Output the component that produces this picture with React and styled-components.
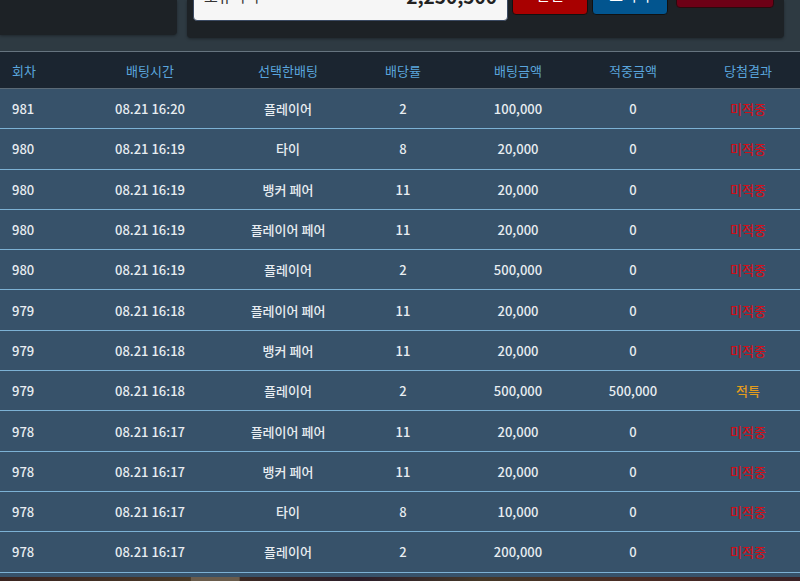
import styled, { createGlobalStyle } from "styled-components";

const GlobalStyle = createGlobalStyle`
  html, body {
    margin: 0;
    padding: 0;
    background: #2e3a42;
    font-family: "Noto Sans CJK KR", "Noto Sans", sans-serif;
  }
  * { box-sizing: border-box; }
`;

const rows = [
  ["981", "08.21 16:20", "플레이어", "2", "100,000", "0", "미적중"],
  ["980", "08.21 16:19", "타이", "8", "20,000", "0", "미적중"],
  ["980", "08.21 16:19", "뱅커 페어", "11", "20,000", "0", "미적중"],
  ["980", "08.21 16:19", "플레이어 페어", "11", "20,000", "0", "미적중"],
  ["980", "08.21 16:19", "플레이어", "2", "500,000", "0", "미적중"],
  ["979", "08.21 16:18", "플레이어 페어", "11", "20,000", "0", "미적중"],
  ["979", "08.21 16:18", "뱅커 페어", "11", "20,000", "0", "미적중"],
  ["979", "08.21 16:18", "플레이어", "2", "500,000", "500,000", "적특"],
  ["978", "08.21 16:17", "플레이어 페어", "11", "20,000", "0", "미적중"],
  ["978", "08.21 16:17", "뱅커 페어", "11", "20,000", "0", "미적중"],
  ["978", "08.21 16:17", "타이", "8", "10,000", "0", "미적중"],
  ["978", "08.21 16:17", "플레이어", "2", "200,000", "0", "미적중"],
];

const headers = ["회차", "배팅시간", "선택한배팅", "배당률", "배팅금액", "적중금액", "당첨결과"];

export default function App() {
  return (
    <>
      <GlobalStyle />
      <Page>
        <TopArea>
          <LeftPanel />
          <RightPanel>
            <PanelRow>
              <MoneyBox>
                <MoneyLabel>보유머니</MoneyLabel>
                <MoneyValue>2,250,500</MoneyValue>
              </MoneyBox>
              <ActionButton $bg="#a80000">환전</ActionButton>
              <ActionButton $bg="#02558f">초기화</ActionButton>
              <CloseButton>닫기</CloseButton>
            </PanelRow>
          </RightPanel>
        </TopArea>
        <Table>
          <HeaderRow>
            {headers.map((h, i) => (
              <HeadCell key={h} $first={i === 0} $last={i === headers.length - 1}>
                {h}
              </HeadCell>
            ))}
          </HeaderRow>
          {rows.map((r, idx) => (
            <Row key={idx}>
              {r.map((c, i) => (
                <Cell
                  key={i}
                  $first={i === 0}
                  $last={i === r.length - 1}
                  $result={i === r.length - 1 ? c : null}
                >
                  {c}
                </Cell>
              ))}
            </Row>
          ))}
          <TableFoot />
        </Table>
        <Backdrop />
      </Page>
    </>
  );
}

const Page = styled.div`
  width: 800px;
  height: 581px;
  overflow: hidden;
  display: flex;
  flex-direction: column;
`;

const TopArea = styled.div`
  height: 51px;
  flex-shrink: 0;
  display: flex;
  gap: 10px;
  align-items: flex-start;
  background: #2e3a42;
  overflow: hidden;
`;

const LeftPanel = styled.div`
  width: 177px;
  height: 35px;
  background: #1d2226;
  border-radius: 0 0 4px 0;
  box-shadow: 0 1px 3px rgba(0, 0, 0, 0.35);
`;

const RightPanel = styled.div`
  width: 597px;
  height: 38px;
  background: #1d2226;
  border-radius: 0 0 4px 4px;
  box-shadow: 0 1px 3px rgba(0, 0, 0, 0.35);
  padding: 0 6px;
  overflow: hidden;
`;

const PanelRow = styled.div`
  display: flex;
  align-items: flex-start;
  gap: 4px;
  margin-top: -30px;
`;

const MoneyBox = styled.div`
  width: 315px;
  height: 51px;
  background: #f6f6f6;
  border: 1px solid #3b4a62;
  border-radius: 4px;
  display: flex;
  align-items: flex-end;
  justify-content: space-between;
  padding: 0 10px 13px 10px;
`;

const MoneyLabel = styled.span`
  font-size: 15px;
  color: #333;
  line-height: 20px;
  margin-bottom: 1px;
`;

const MoneyValue = styled.span`
  font-size: 19px;
  font-weight: 700;
  color: #222;
  line-height: 22px;
`;

const ActionButton = styled.div`
  width: 76px;
  height: 45px;
  background: ${(p) => p.$bg};
  border: 1px solid #111;
  border-radius: 4px;
  color: #fff;
  font-size: 15px;
  display: flex;
  align-items: flex-end;
  justify-content: center;
  padding-bottom: 9px;
  line-height: 20px;
`;

const CloseButton = styled.div`
  width: 98px;
  height: 38px;
  margin-left: 4px;
  background: #6e0016;
  border: 1px solid #2a0a0e;
  border-radius: 4px;
  color: #fff;
  font-size: 15px;
  display: flex;
  align-items: center;
  justify-content: center;
`;

const Table = styled.div`
  display: flex;
  flex-direction: column;
  flex-shrink: 0;
  background: #37526a;
  border-top: 1px solid #66747f;
`;

const cols = "80px 140px 136px 94px 136px 94px 1fr";

const HeaderRow = styled.div`
  display: grid;
  grid-template-columns: ${cols};
  height: 37px;
  align-items: center;
  background: #1b2530;
  border-bottom: 1px solid #5b6a76;
`;

const HeadCell = styled.div`
  font-size: 13px;
  color: #5aa5dd;
  text-align: ${(p) => (p.$first ? "left" : "center")};
  padding-left: ${(p) => (p.$first ? "12px" : p.$last ? "16px" : "0")};
`;

const Row = styled.div`
  display: grid;
  grid-template-columns: ${cols};
  height: 40.3px;
  align-items: center;
  border-bottom: 1px solid #7cb1d4;
  &:last-of-type {
    border-bottom-color: #8fb4cc;
  }
`;

const resultColor = (r) => (r === "적특" ? "#e39c1c" : "#d0101a");

const Cell = styled.div`
  font-size: 13px;
  font-weight: 500;
  color: ${(p) => (p.$result ? resultColor(p.$result) : "#e8edf1")};
  text-align: ${(p) => (p.$first ? "left" : "center")};
  padding-left: ${(p) => (p.$first ? "12px" : p.$last ? "16px" : "0")};
  white-space: nowrap;
`;

const TableFoot = styled.div`
  height: 4px;
`;

const Backdrop = styled.div`
  flex: 1;
  background: linear-gradient(
    90deg,
    #3a2420 0%,
    #4a3a28 23.8%,
    #6a5c4c 23.9%,
    #6a5c4c 29.9%,
    #3c2a24 30%,
    #2c1e2a 45%,
    #453828 60%,
    #4a2c24 80%,
    #3a2226 100%
  );
`;
